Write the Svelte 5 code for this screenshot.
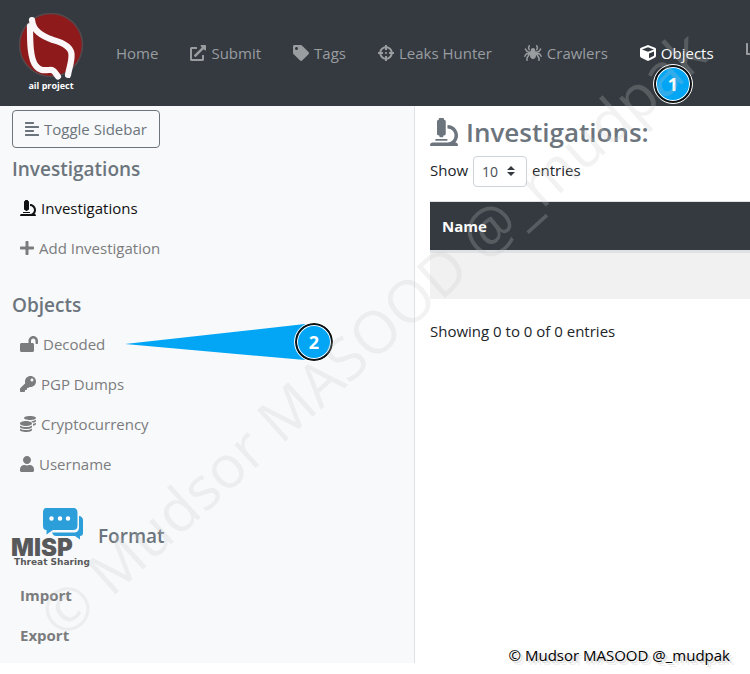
<script>
  const icons = {
    submit: { w: 512, d: 'M432,320H400a16,16,0,0,0-16,16V448H64V128H208a16,16,0,0,0,16-16V80a16,16,0,0,0-16-16H48A48,48,0,0,0,0,112V464a48,48,0,0,0,48,48H400a48,48,0,0,0,48-48V336A16,16,0,0,0,432,320ZM488,0h-128c-21.37,0-32.05,25.91-17,41l35.73,35.73L135,320.37a24,24,0,0,0,0,34L157.67,377a24,24,0,0,0,34,0L435.28,133.32,471,169c15,15,41,4.5,41-17V24A24,24,0,0,0,488,0Z' },
    tag: { w: 512, d: 'M0 252.118V48C0 21.49 21.49 0 48 0h204.118a48 48 0 0 1 33.941 14.059l211.882 211.882c18.745 18.745 18.745 49.137 0 67.882L293.823 497.941c-18.745 18.745-49.137 18.745-67.882 0L14.059 286.059A48 48 0 0 1 0 252.118zM112 64c-26.51 0-48 21.49-48 48s21.49 48 48 48 48-21.49 48-48-21.49-48-48-48z' },
    crosshairs: { w: 512, d: 'M500 224h-30.364C455.724 130.325 381.675 56.276 288 42.364V12c0-6.627-5.373-12-12-12h-40c-6.627 0-12 5.373-12 12v30.364C130.325 56.276 56.276 130.325 42.364 224H12c-6.627 0-12 5.373-12 12v40c0 6.627 5.373 12 12 12h30.364C56.276 381.675 130.325 455.724 224 469.636V500c0 6.627 5.373 12 12 12h40c6.627 0 12-5.373 12-12v-30.364C381.675 455.724 455.724 381.675 469.636 288H500c6.627 0 12-5.373 12-12v-40c0-6.627-5.373-12-12-12zM288 404.634V364c0-6.627-5.373-12-12-12h-40c-6.627 0-12 5.373-12 12v40.634C165.826 392.232 119.783 346.243 107.366 288H148c6.627 0 12-5.373 12-12v-40c0-6.627-5.373-12-12-12h-40.634C119.768 165.826 165.757 119.783 224 107.366V148c0 6.627 5.373 12 12 12h40c6.627 0 12-5.373 12-12v-40.634C346.174 119.768 392.217 165.757 404.634 224H364c-6.627 0-12 5.373-12 12v40c0 6.627 5.373 12 12 12h40.634C392.232 346.174 346.243 392.217 288 404.634zM288 256c0 17.673-14.327 32-32 32s-32-14.327-32-32c0-17.673 14.327-32 32-32s32 14.327 32 32z' },
    spider: { w: 576, d: 'M151.17 167.35L177.1 176h4.67l5.22-26.12c.72-3.58 1.8-7.58 3.21-11.79l-20.29-40.58 23.8-71.39c2.79-8.38-1.73-17.44-10.12-20.24L168.42.82c-8.38-2.8-17.45 1.73-20.24 10.12l-25.89 77.68a32.04 32.04 0 0 0 1.73 24.43l27.15 54.3zm422.14 182.03l-52.75-79.12a32.002 32.002 0 0 0-26.62-14.25H416l68.99-24.36a32.03 32.03 0 0 0 16.51-12.61l53.6-80.41c4.9-7.35 2.91-17.29-4.44-22.19l-13.31-8.88c-7.35-4.9-17.29-2.91-22.19 4.44l-50.56 75.83L404.1 208H368l-10.37-51.85C355.44 145.18 340.26 96 288 96c-52.26 0-67.44 49.18-69.63 60.15L208 208h-36.1l-60.49-20.17L60.84 112c-4.9-7.35-14.83-9.34-22.19-4.44l-13.31 8.88c-7.35 4.9-9.34 14.83-4.44 22.19l53.6 80.41a32.03 32.03 0 0 0 16.51 12.61L160 256H82.06a32.02 32.02 0 0 0-26.63 14.25L2.69 349.38c-4.9 7.35-2.92 17.29 4.44 22.19l13.31 8.88c7.35 4.9 17.29 2.91 22.19-4.44l48-72h47.06l-60.83 97.33A31.988 31.988 0 0 0 72 418.3V496c0 8.84 7.16 16 16 16h16c8.84 0 16-7.16 16-16v-73.11l74.08-118.53c-1.01 14.05-2.08 28.11-2.08 42.21C192 399.64 232.76 448 288 448s96-48.36 96-101.43c0-14.1-1.08-28.16-2.08-42.21L456 422.89V496c0 8.84 7.16 16 16 16h16c8.84 0 16-7.16 16-16v-77.71c0-6-1.69-11.88-4.86-16.96L438.31 304h47.06l48 72c4.9 7.35 14.84 9.34 22.19 4.44l13.31-8.88c7.36-4.9 9.34-14.83 4.44-22.18zM406.09 97.51l-20.29 40.58c1.41 4.21 2.49 8.21 3.21 11.79l5.22 26.12h4.67l25.93-8.65 27.15-54.3a31.995 31.995 0 0 0 1.73-24.43l-25.89-77.68C425.03 2.56 415.96-1.98 407.58.82l-15.17 5.06c-8.38 2.8-12.91 11.86-10.12 20.24l23.8 71.39z' },
    cube: { w: 512, d: 'M239.1 6.3l-208 78c-18.7 7-31.1 25-31.1 45v225.1c0 18.2 10.3 34.8 26.5 42.9l208 104c13.5 6.8 29.4 6.8 42.9 0l208-104c16.3-8.1 26.5-24.8 26.5-42.9V129.3c0-20-12.4-37.9-31.1-44.9l-208-78C262 2.2 250 2.2 239.1 6.3zM256 68.4l192 72v1.1l-192 78-192-78v-1.1l192-72zm32 356V275.5l160-65v133.9l-160 80z' },
    chart: { w: 512, d: 'M496 384H64V80c0-8.84-7.16-16-16-16H16C7.16 64 0 71.16 0 80v336c0 17.67 14.33 32 32 32h464c8.84 0 16-7.16 16-16v-32c0-8.84-7.16-16-16-16zM128 224h64v128h-64zM224 96h64v256h-64zM320 160h64v192h-64zM416 96h64v256h-64z' },
    align: { w: 448, d: 'M13 32h262a13 13 0 0 1 13 13v38a13 13 0 0 1-13 13H13A13 13 0 0 1 0 83V45a13 13 0 0 1 13-13zM13 288h262a13 13 0 0 1 13 13v38a13 13 0 0 1-13 13H13A13 13 0 0 1 0 339v-38a13 13 0 0 1 13-13zM16 160h416a16 16 0 0 1 16 16v32a16 16 0 0 1-16 16H16a16 16 0 0 1-16-16v-32a16 16 0 0 1 16-16zM16 416h416a16 16 0 0 1 16 16v32a16 16 0 0 1-16 16H16a16 16 0 0 1-16-16v-32a16 16 0 0 1 16-16z' },
    microscope: { w: 512, d: 'M160 320h12v16c0 8.84 7.16 16 16 16h40c8.84 0 16-7.16 16-16v-16h12c17.67 0 32-14.33 32-32V64c0-17.67-14.33-32-32-32V16c0-8.84-7.16-16-16-16h-64c-8.84 0-16 7.16-16 16v16c-17.67 0-32 14.33-32 32v224c0 17.67 14.33 32 32 32zm304 128h-1.29C493.24 413.99 512 369.2 512 320c0-105.88-86.12-192-192-192v64c70.58 0 128 57.42 128 128s-57.42 128-128 128H48c-26.51 0-48 21.49-48 48 0 8.84 7.16 16 16 16h480c8.84 0 16-7.16 16-16 0-26.51-21.49-48-48-48zm-360-32h208c4.42 0 8-3.58 8-8v-16c0-4.42-3.58-8-8-8H104c-4.42 0-8 3.58-8 8v16c0 4.42 3.58 8 8 8z' },
    plus: { w: 448, d: 'M416 208H272V64c0-17.67-14.33-32-32-32h-32c-17.67 0-32 14.33-32 32v144H32c-17.67 0-32 14.33-32 32v32c0 17.67 14.33 32 32 32h144v144c0 17.67 14.33 32 32 32h32c17.67 0 32-14.33 32-32V304h144c17.67 0 32-14.33 32-32v-32c0-17.67-14.33-32-32-32z' },
    unlock: { w: 576, d: 'M423.5 0C339.5.3 272 69.5 272 153.5V224H48c-26.5 0-48 21.5-48 48v192c0 26.5 21.5 48 48 48h352c26.5 0 48-21.5 48-48V272c0-26.5-21.5-48-48-48h-48v-71.1c0-39.6 31.7-72.5 71.3-72.9 40-.4 72.7 32.1 72.7 72v80c0 13.3 10.7 24 24 24h32c13.3 0 24-10.7 24-24v-80C576 68 507.5-.3 423.5 0z' },
    key: { w: 512, d: 'M512 176.001C512 273.203 433.202 352 336 352c-11.22 0-22.19-1.062-32.827-3.069l-24.012 27.014A23.999 23.999 0 0 1 261.223 384H224v40c0 13.255-10.745 24-24 24h-40v40c0 13.255-10.745 24-24 24H24c-13.255 0-24-10.745-24-24v-78.059c0-6.365 2.529-12.47 7.029-16.971l161.802-161.802C163.108 213.814 160 195.271 160 176 160 78.798 238.797.001 335.999 0 433.488-.001 512 78.511 512 176.001zM336 128c0 26.51 21.49 48 48 48s48-21.49 48-48-21.49-48-48-48-48 21.49-48 48z' },
    coins: { w: 512, d: 'M0 405.3V448c0 35.3 86 64 192 64s192-28.7 192-64v-42.7C342.7 434.4 267.2 448 192 448S41.3 434.4 0 405.3zM320 128c106 0 192-28.7 192-64S426 0 320 0 128 28.7 128 64s86 64 192 64zM0 300.4V352c0 35.3 86 64 192 64s192-28.7 192-64v-51.6c-41.3 34-116.9 51.6-192 51.6S41.3 334.4 0 300.4zm416 11c57.3-11.1 96-31.7 96-55.4v-42.7c-23.2 16.4-57.3 27.6-96 34.5v63.6zM192 160C86 160 0 195.8 0 240s86 80 192 80 192-35.8 192-80-86-80-192-80zm219.3 56.3c60-10.8 100.7-32 100.7-56.3v-42.7c-35.5 25.1-96.5 38.6-160.7 41.8 29.5 14.3 51.2 33.5 60 57.2z' },
    user: { w: 448, d: 'M224 256c70.7 0 128-57.3 128-128S294.7 0 224 0 96 57.3 96 128s57.3 128 128 128zm89.6 32h-16.7c-22.2 10.2-46.9 16-72.9 16s-50.6-5.8-72.9-16h-16.7C60.2 288 0 348.2 0 422.4V464c0 26.5 21.5 48 48 48h352c26.5 0 48-21.5 48-48v-41.6c0-74.2-60.2-134.4-134.4-134.4z' }
  };

  const navItems = [
    { label: 'Home' },
    { label: 'Submit', icon: 'submit' },
    { label: 'Tags', icon: 'tag' },
    { label: 'Leaks Hunter', icon: 'crosshairs' },
    { label: 'Crawlers', icon: 'spider' },
    { label: 'Objects', icon: 'cube', active: true, step: 1 },
    { label: '', icon: 'chart', name: 'Statistics' }
  ];
  const investigationLinks = [
    { label: 'Investigations', icon: 'microscope', active: true },
    { label: 'Add Investigation', icon: 'plus' }
  ];
  const objectLinks = [
    { label: 'Decoded', icon: 'unlock', step: 2 },
    { label: 'PGP Dumps', icon: 'key' },
    { label: 'Cryptocurrency', icon: 'coins' },
    { label: 'Username', icon: 'user' }
  ];
  const credit = '© Mudsor MASOOD @_mudpak';
  let pageSize = $state('10');
</script>

{#snippet icon(name)}
  <svg class="icon" viewBox="0 0 {icons[name].w} 512" style:width="{icons[name].w / 512}em" aria-hidden="true"><path d={icons[name].d} /></svg>
{/snippet}

{#snippet sideLinks(links)}
  <ul class="links">
    {#each links as link}
      <li>
        <a href="#top" class:active={link.active}>{@render icon(link.icon)}<span>{link.label}</span></a>
        {#if link.step}
          <div class="pointer">
            <svg viewBox="0 0 180 36" aria-hidden="true"><path d="M0 20 180 0V36Z" /></svg>
            <span class="step">{link.step}</span>
          </div>
        {/if}
      </li>
    {/each}
  </ul>
{/snippet}

<div class="page">
  <header>
    <a class="brand" href="#top" aria-label="ail project">
      <svg viewBox="0 0 80 84" aria-hidden="true">
        <circle cx="39" cy="34" r="31.5" fill="#8e1a1b" stroke="#55484c" stroke-width="1.6" />
        <path d="M20 9 C21 20 30 25 41 29 C52 32 59 36 59.500 43 C60 51 57 57 56 64 M18 15 C18 30 18 48 24 55 C28 60 32 59 37 59 C42 58 43 62 46 65.500" fill="none" stroke="#fbf7f8" stroke-width="6.2" stroke-linecap="round" stroke-linejoin="round" />
        <text x="39" y="78" text-anchor="middle">ail project</text>
      </svg>
    </a>
    <nav>
      {#each navItems as item}
        <div class="navItem">
          <a href="#top" class:active={item.active} aria-label={item.name}>
            {#if item.icon}{@render icon(item.icon)}{/if}<span>{item.label}</span>
          </a>
          {#if item.step}<span class="step">{item.step}</span>{/if}
        </div>
      {/each}
    </nav>
  </header>

  <div class="body">
    <aside>
      <button type="button" class="toggle">{@render icon('align')}<span>Toggle Sidebar</span></button>
      <h2>Investigations</h2>
      {@render sideLinks(investigationLinks)}
      <h2>Objects</h2>
      {@render sideLinks(objectLinks)}
      <h2 class="misp">
        <svg viewBox="0 0 82 59" role="img" aria-label="MISP Threat Sharing">
          <path d="M67 8c2 0 4 2 4 4v13c0 2-1 3-3 3v3.500l-5-3.500H44c-2 0-3-1-4-3.500h22c3 0 5-2 5-5V8z" fill="#2c9fdb" />
          <path d="M35 0h26c3 0 4.500 1.500 4.500 4.500v13c0 3-1.500 4.500-4.500 4.500H41l-6.500 4.500V22c-2.500 0-3.500-1.500-3.500-4.500v-13C31 1.500 32 0 35 0z" fill="#2c9fdb" />
          <path d="M39.500 10.500h0M48 10.500h0M56 10.500h0" fill="none" stroke="#fff" stroke-width="4.500" stroke-linecap="round" />
          <text class="mispName" x="-1" y="48">MISP</text>
          <text class="mispSub" x="2" y="57">Threat Sharing</text>
        </svg>
        <span>Format</span>
      </h2>
      <ul class="links strong">
        <li><a href="#top">Import</a></li>
        <li><a href="#top">Export</a></li>
      </ul>
    </aside>

    <main>
      <h1>{@render icon('microscope')}<span>Investigations:</span></h1>
      <label class="length">
        Show
        <span class="selectBox">
          <select bind:value={pageSize}>
            <option>10</option>
            <option>25</option>
            <option>50</option>
          </select>
          <svg viewBox="0 0 8 10" aria-hidden="true"><path d="M4 0 8 4H0ZM0 6H8L4 10Z" /></svg>
        </span>
        entries
      </label>
      <table>
        <thead><tr><th>Name</th></tr></thead>
        <tbody><tr><td></td></tr></tbody>
      </table>
      <p>Showing 0 to 0 of 0 entries</p>
    </main>
  </div>

  <div class="watermark" aria-hidden="true">{credit}</div>
  <div class="credit">{credit}</div>
</div>

<style>
  :global(body) { margin: 0; background: #fff; }
  .page {
    position: relative;
    min-height: 100vh;
    overflow: hidden;
    font: 15px/24px "Open Sans", "Noto Sans", sans-serif;
    color: #212529;
  }
  a { color: inherit; text-decoration: none; }
  .icon { height: 1em; fill: currentColor; flex: none; font-size: 16px; }

  header { display: flex; align-items: center; height: 106px; background: #343a40; }
  .brand { flex: none; margin: 0 24px 0 12px; }
  .brand svg { display: block; width: 80px; height: 84px; }
  .brand text { font: 700 9px "Open Sans", sans-serif; fill: #fff; }
  nav { display: flex; gap: 32px; color: #9a9da0; }
  .navItem { position: relative; flex: none; }
  .navItem a { display: flex; align-items: center; gap: 5px; }
  .navItem .active { color: #fff; }
  .navItem .step { position: absolute; top: 24px; left: 14px; }

  .step {
    box-sizing: border-box;
    width: 38px;
    height: 38px;
    border: 2px solid #111;
    border-radius: 50%;
    outline: 1px solid #fff;
    box-shadow: inset 0 0 0 1px #fff;
    background: #03a5f5;
    color: #fff;
    font-size: 18px;
    font-weight: 700;
    line-height: 34px;
    text-align: center;
  }

  .body { display: flex; align-items: flex-start; }
  aside {
    box-sizing: border-box;
    flex: 0 1 415px;
    padding: 4px 12px 8px;
    border-right: 1px solid #dee2e6;
    background: #f8f9fa;
  }
  .toggle {
    display: flex;
    align-items: center;
    gap: 5px;
    margin: 0 0 8px;
    padding: 6px 12px;
    border: 1px solid #6c757d;
    border-radius: 4px;
    background: transparent;
    color: #6c757d;
    font: inherit;
  }
  h2 { margin: 0 0 6px; color: #6c757d; font-size: 19px; font-weight: 600; line-height: 26px; }
  .links { list-style: none; margin: 0 0 24px; padding: 0; color: #7b7c7e; }
  .links li { position: relative; }
  .links a { display: flex; align-items: center; gap: 5px; padding: 8px; }
  .links .active { color: #111; }
  .strong { margin: 0; font-weight: 700; }
  .pointer { position: absolute; top: -1px; left: 113px; display: flex; align-items: center; }
  .pointer svg { width: 180px; height: 36px; fill: #03a5f5; }
  .pointer .step { margin-left: -10px; }
  .misp { display: flex; align-items: center; gap: 4px; margin-bottom: 8px; }
  .misp svg { width: 82px; height: 59px; overflow: visible; }
  .misp span { padding-bottom: 4px; }
  .mispName { font: 900 24px Inter, sans-serif; fill: #58595b; }
  .mispSub { font: 700 9px "DejaVu Sans", sans-serif; fill: #58595b; }

  main { flex: 1; min-width: 320px; padding: 10px 0 0 15px; }
  h1 {
    display: flex;
    align-items: center;
    gap: 8px;
    margin: 0 0 8px;
    color: #6c757d;
    font-size: 26px;
    font-weight: 600;
    line-height: 32px;
  }
  h1 .icon { font-size: 28px; }
  .length { display: flex; align-items: flex-start; gap: 5px; line-height: 28px; }
  .selectBox { position: relative; display: block; }
  select {
    display: block;
    appearance: none;
    width: 54px;
    height: 31px;
    padding: 0 8px;
    border: 1px solid #ced4da;
    border-radius: 4px;
    background: #fff;
    color: #495057;
    font: 14px "Open Sans", "Noto Sans", sans-serif;
  }
  .selectBox svg { position: absolute; top: 10px; right: 12px; width: 8px; height: 10px; fill: #343a40; pointer-events: none; }
  table { width: 100%; margin: 14px 0 20px; border-collapse: separate; border-spacing: 0; border-top: 1px solid #dee2e6; }
  th { padding: 12px; border-bottom: 3px solid #dee2e6; background: #343a40; color: #fff; font-weight: 700; text-align: left; }
  td { height: 46px; padding: 0; background: #f1f1f1; }
  p { margin: 0; }

  .watermark {
    position: absolute;
    left: 48px;
    top: 584px;
    color: rgba(200, 200, 200, 0.24);
    font-size: 59px;
    line-height: 80px;
    white-space: nowrap;
    transform: rotate(-42deg);
    transform-origin: 0 50%;
    pointer-events: none;
  }
  .credit {
    position: absolute;
    right: 20px;
    bottom: 7px;
    color: #000;
    font-size: 15px;
    line-height: 24px;
    text-shadow: 2px 2px 0 #ddd, 4px 4px 0 #eee;
  }
</style>
